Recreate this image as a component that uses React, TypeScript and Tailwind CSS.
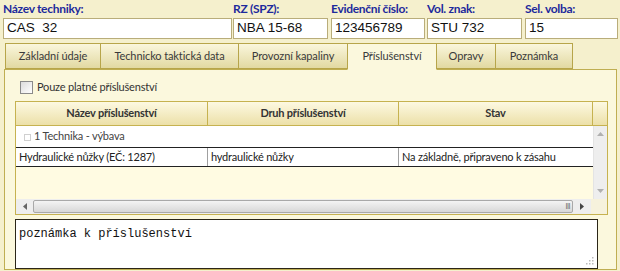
import React from 'react';

const fields = [
  { label: 'Název techniky:', value: 'CAS  32', w: 'w-[229px]', ml: 'ml-0' },
  { label: 'RZ (SPZ):', value: 'NBA 15-68', w: 'w-[95px]', ml: 'ml-[1px]' },
  { label: 'Evidenční číslo:', value: '123456789', w: 'w-[94px]', ml: 'ml-[3px]' },
  { label: 'Vol. znak:', value: 'STU 732', w: 'w-[95px]', ml: 'ml-[2px]' },
  { label: 'Sel. volba:', value: '15', w: 'w-[93px]', ml: 'ml-[3px]' },
];

const tabs = [
  { name: 'Základní údaje', w: 'w-[96px]' },
  { name: 'Technicko taktická data', w: 'w-[139px]' },
  { name: 'Provozní kapaliny', w: 'w-[110px]' },
  { name: 'Příslušenství', w: 'w-[90px]', active: true },
  { name: 'Opravy', w: 'w-[60px]' },
  { name: 'Poznámka', w: 'w-[78px]' },
];

const ui = "font-['Lato','Noto_Sans',sans-serif]";

export default function App() {
  return (
    <div className={`w-[620px] h-[271px] bg-[#f5f0cd] overflow-hidden ${ui}`}>
      {/* header fields */}
      <div className="flex pl-[3px]">
        {fields.map((f) => (
          <div key={f.label} className={`${f.w} ${f.ml} flex flex-col`}>
            <div className="h-[18px] pt-[2px] text-[12px] leading-[14px] font-bold tracking-[-0.3px] text-[#1d2a9c] whitespace-nowrap">
              {f.label}
            </div>
            <div className="h-[21px] bg-white border border-[#b9ad7a] px-[3px] flex items-center font-['Liberation_Sans',sans-serif] text-[13.5px] text-[#111] whitespace-pre">
              {f.value}
            </div>
          </div>
        ))}
      </div>

      {/* tabs */}
      <div className="flex pl-[5px] mt-[4px] h-[26px] relative z-10">
        {tabs.map((t) => (
          <div
            key={t.name}
            className={`${t.w} -ml-px first:ml-0 flex items-center justify-center text-[11px] tracking-[-0.1px] text-[#3a3a3a] border border-[#b7a54a] whitespace-nowrap ${
              t.active
                ? 'bg-[#fbf8dd] border-b-[#fbf8dd] h-[27px]'
                : 'bg-gradient-to-b from-[#faf6dc] to-[#e2d9a2] h-[26px]'
            }`}
          >
            {t.name}
          </div>
        ))}
      </div>

      {/* panel */}
      <div className="ml-[4px] w-[613px] h-[201px] border border-[#bfae52] bg-[#fbf8dd] pt-[11px] pl-[10px]">
        <div className="flex items-center h-[13px] ml-[5px]">
          <div className="w-[13px] h-[13px] border border-[#8a8a8a] bg-gradient-to-br from-[#dcdcdc] to-white" />
          <span className="ml-[4px] text-[11px] tracking-[-0.2px] text-[#333]">Pouze platné příslušenství</span>
        </div>

        {/* grid */}
        <div className="mt-[7px] w-[593px] h-[114px] border border-[#c6b250] bg-[#fffbe2] flex flex-col text-[11px] tracking-[-0.2px] text-[#222]">
          <div className="h-[24px] flex bg-gradient-to-b from-[#fdf9e2] to-[#ece0a8] border-b border-[#c6b250] font-bold text-[#333]">
            <div className="w-[192px] flex items-center justify-center border-r border-[#c6b250]">Název příslušenství</div>
            <div className="w-[191px] flex items-center justify-center border-r border-[#c6b250]">Druh příslušenství</div>
            <div className="w-[194px] flex items-center justify-center border-r border-[#c6b250]">Stav</div>
            <div className="flex-1" />
          </div>
          <div className="flex flex-1">
            <div className="w-[577px] flex flex-col">
              <div className="h-[21px] bg-white flex items-center pl-[8px] text-[#444]">
                <span className="w-[7px] h-[7px] border border-[#d0d0d0] mr-[3px] mt-[1px]" />
                1 Technika - výbava
              </div>
              <div className="h-[20px] bg-white flex border-y border-[#222]">
                <div className="w-[192px] pl-[3px] flex items-center border-r border-[#a0a0a0]">Hydraulické nůžky (EČ: 1287)</div>
                <div className="w-[191px] pl-[3px] flex items-center border-r border-[#a0a0a0]">hydraulické nůžky</div>
                <div className="w-[194px] pl-[3px] flex items-center">Na základně, připraveno k zásahu</div>
              </div>
              <div className="flex-1" />
            </div>
            <div className="flex-1 bg-[#eeeeee] border-l border-[#e4e4e4] flex flex-col items-center justify-between py-[6px]">
              <svg width="7" height="4" viewBox="0 0 7 4"><path d="M0 4 L3.5 0 L7 4Z" fill="#b0b0b0" /></svg>
              <svg width="7" height="4" viewBox="0 0 7 4"><path d="M0 0 L3.5 4 L7 0Z" fill="#b0b0b0" /></svg>
            </div>
          </div>
          <div className="h-[15px] flex bg-[#eeeeee]">
            <div className="w-[17px] flex items-center justify-center">
              <svg width="4" height="7" viewBox="0 0 4 7"><path d="M4 0 L0 3.5 L4 7Z" fill="#666" /></svg>
            </div>
            <div className="w-[540px] my-px rounded-[2px] border border-[#a9a9a9] bg-gradient-to-b from-[#f4f4f4] to-[#d8d8d8] flex items-center justify-end pr-[2px]">
              <span className="text-[7px] leading-none text-[#666] tracking-[-0.5px]">III</span>
            </div>
            <div className="w-[18px] flex items-center justify-center">
              <svg width="4" height="7" viewBox="0 0 4 7"><path d="M0 0 L4 3.5 L0 7Z" fill="#444" /></svg>
            </div>
            <div className="flex-1 bg-[#f6f2dc]" />
          </div>
        </div>

        {/* note */}
        <div className="mt-[4px] w-[583px] h-[50px] border border-[#2b2618] bg-white relative font-['Liberation_Mono',monospace] text-[12px] text-[#111] pl-[3px] pt-[6px] leading-[16px]">
          poznámka k příslušenství
          <svg className="absolute right-[3px] bottom-[3px]" width="8" height="8" viewBox="0 0 8 8">
            <rect x="6" y="0" width="1.5" height="1.5" fill="#bbb" />
            <rect x="3" y="3" width="1.5" height="1.5" fill="#bbb" />
            <rect x="6" y="3" width="1.5" height="1.5" fill="#bbb" />
            <rect x="0" y="6" width="1.5" height="1.5" fill="#bbb" />
            <rect x="3" y="6" width="1.5" height="1.5" fill="#bbb" />
            <rect x="6" y="6" width="1.5" height="1.5" fill="#bbb" />
          </svg>
        </div>
      </div>
    </div>
  );
}
